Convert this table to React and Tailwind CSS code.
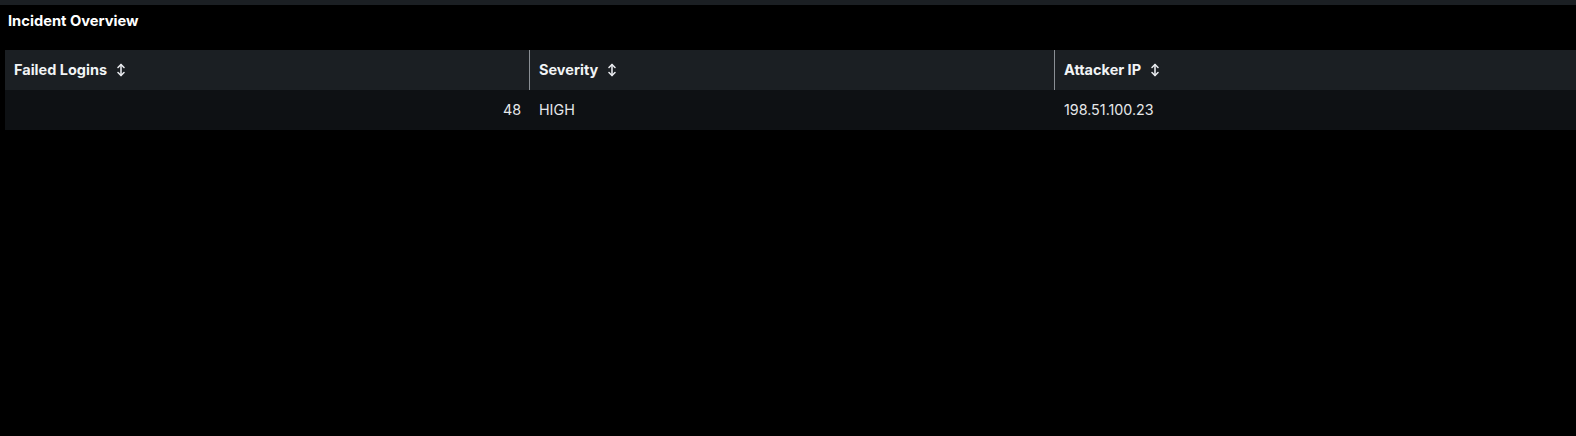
import React from "react";

function SortIcon() {
  return (
    <svg width="10" height="14" viewBox="0 0 10 14" className="ml-[9px] shrink-0" fill="none" stroke="#e5e7eb" strokeWidth="1.6" strokeLinecap="round" strokeLinejoin="round">
      <path d="M5 1.5v11" />
      <path d="M2 4.5l3-3 3 3" />
      <path d="M2 9.5l3 3 3-3" />
    </svg>
  );
}

const cols = ["Failed Logins", "Severity", "Attacker IP"];

export default function App() {
  return (
    <div className="w-[1576px] h-[436px] bg-black text-white" style={{ fontFamily: "Inter, 'Open Sans', sans-serif" }}>
      <div className="h-[5px] bg-[#1b1f23]" />
      <div className="h-[45px] pl-2 pt-[7px] text-[14.7px] font-bold text-white leading-[18px]">Incident Overview</div>
      <div className="ml-[5px]">
        <div className="grid grid-cols-[524px_525px_1fr] h-10 bg-[#1b1f23]">
          {cols.map((c, i) => (
            <div key={c} className={`flex items-center pl-[9px] pb-[1px] text-[14.5px] font-bold text-[#f1f3f5] ${i > 0 ? "border-l border-[#8a8f95]" : ""}`}>
              {c}
              <SortIcon />
            </div>
          ))}
        </div>
        <div className="grid grid-cols-[524px_525px_1fr] h-10 bg-[#0e1114] text-[14.3px] text-[#e6e8ea]">
          <div className="flex items-center justify-end pr-[8px] pb-[1px]">48</div>
          <div className="flex items-center pl-[10px] pb-[1px]">HIGH</div>
          <div className="flex items-center pl-[10px] pb-[1px]">198.51.100.23</div>
        </div>
      </div>
    </div>
  );
}
